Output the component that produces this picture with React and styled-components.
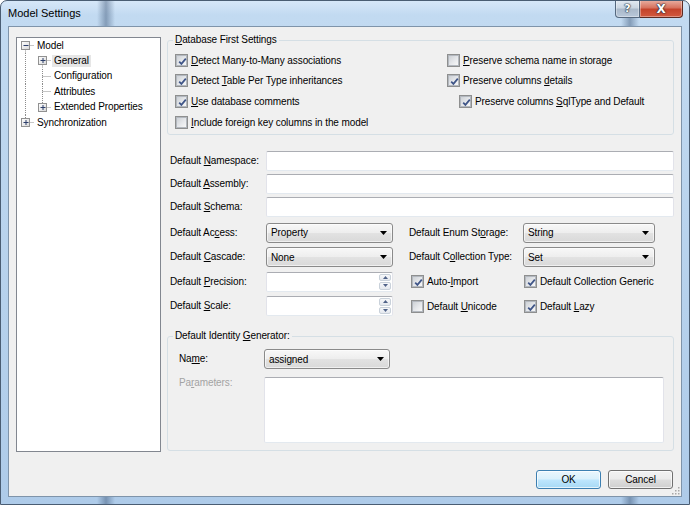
import React from 'react';
import styled, { createGlobalStyle } from 'styled-components';

const GlobalStyle = createGlobalStyle`
  html, body {
    margin: 0;
    padding: 0;
    background: #fff;
    overflow: hidden;
  }
  * {
    box-sizing: border-box;
  }
`;

const Window = styled.div`
  width: 690px;
  height: 505px;
  display: flex;
  flex-direction: column;
  border: 1px solid #4a5d73;
  border-radius: 7px 7px 0 0;
  overflow: hidden;
  background:
    linear-gradient(90deg, transparent 96px, rgba(30, 55, 90, 0.38) 105px, transparent 114px,
      transparent 620px, rgba(30, 55, 90, 0.38) 629px, transparent 638px),
    linear-gradient(180deg, #d6e7f8 0%, #c2daf1 14px, #b6d1ec 60%, #aecbe9 100%);
  font-family: "Liberation Sans", Arial, sans-serif;
  font-size: 10px;
  letter-spacing: -0.1px;
  color: #000;
`;

const TitleBar = styled.div`
  flex: none;
  height: 25px;
  display: flex;
  align-items: flex-start;
  padding-left: 7px;
`;

const Title = styled.div`
  flex: 1;
  font-size: 11px;
  letter-spacing: 0;
  line-height: 25px;
`;

const Caption = styled.div`
  display: flex;
  margin: -1px 6px 0 0;
`;

const CaptionButton = styled.div`
  width: ${p => p.$w}px;
  height: 18px;
  display: flex;
  align-items: center;
  justify-content: center;
  font-family: "DejaVu Sans", sans-serif;
  font-weight: bold;
  font-size: ${p => (p.$close ? 12 : 11)}px;
  color: #fff;
  text-shadow: 0 0 1px #1d2a38, 0 0 1px #1d2a38, 0 0 2px #1d2a38;
  border: 1px solid ${p => (p.$close ? '#5d2a22' : '#55687e')};
  border-top: none;
  border-left: ${p => (p.$close ? 'none' : undefined)};
  border-radius: ${p => (p.$close ? '0 0 4px 0' : '0 0 0 4px')};
  background: ${p =>
    p.$close
      ? 'linear-gradient(180deg, #eab1a4 0%, #d7735f 45%, #c4432b 55%, #d2593f 100%)'
      : 'linear-gradient(180deg, #e4ebf3 0%, #cbd6e2 45%, #aab9ca 55%, #b8c8da 100%)'};
  box-shadow: inset 0 0 0 1px rgba(255, 255, 255, 0.35);
`;

const Client = styled.div`
  position: relative;
  flex: 1;
  margin: 0 7px 7px;
  border: 1px solid #7f94aa;
  background: #f0f0f0;
  padding: 7px 7px 0;
  display: flex;
  flex-direction: column;
`;

const Main = styled.div`
  display: flex;
  align-items: flex-start;
  gap: 6px;
`;

const Tree = styled.div`
  flex: none;
  width: 145px;
  height: 415px;
  margin-top: 3px;
  background: #fff;
  border: 1px solid #828790;
`;

const TreeRow = styled.div`
  display: flex;
  align-items: center;
  height: 15.4px;
  white-space: nowrap;
`;

const TreeLabel = styled.span`
  margin-left: 1px;
  padding: 0 2px;
  line-height: 12px;
  background: ${p => (p.$selected ? '#e6e6e6' : 'transparent')};
`;

const Right = styled.div`
  flex: 1;
  display: flex;
  flex-direction: column;
`;

const Group = styled.fieldset`
  margin: ${p => p.$margin};
  padding: ${p => p.$pad};
  border: 1px solid #d5dfe5;
  border-radius: 3px;
  min-width: 0;
`;

const Legend = styled.legend`
  margin-left: ${p => p.$offset}px;
  padding: 0 2px;
  line-height: 12px;
`;

const CheckGrid = styled.div`
  display: grid;
  grid-template-columns: 272px 1fr;
  grid-auto-rows: 20.67px;
`;

const CheckRow = styled.label`
  display: flex;
  align-items: center;
  gap: 3px;
  padding-left: ${p => p.$indent || 0}px;
  white-space: nowrap;
`;

const Box = styled.span`
  position: relative;
  flex: none;
  width: 13px;
  height: 13px;
  border: 1px solid #8e8f8f;
  background: #fff;
  display: flex;
  align-items: center;
  justify-content: center;

  &::before {
    content: '';
    width: 9px;
    height: 9px;
    border: 1px solid #b3b8bf;
    background: linear-gradient(135deg, #cdd1d6 0%, #e6e8eb 55%, #f7f7f7 100%);
  }

  svg {
    position: absolute;
    left: 1px;
    top: 1px;
  }
`;

const TextFields = styled.div`
  margin-top: 16px;
  display: grid;
  grid-template-columns: 99px 1fr;
  grid-auto-rows: 20px;
  row-gap: 3.3px;
  align-items: center;
`;

const Options = styled.div`
  margin-top: 5.5px;
  display: grid;
  grid-template-columns: 99px 127px 130px 132px;
  grid-auto-rows: 20px;
  row-gap: 4.5px;
  align-items: center;
`;

const FieldLabel = styled.div`
  padding-left: ${p => p.$indent ?? 3}px;
  white-space: nowrap;
  color: ${p => (p.$disabled ? '#a3a3a3' : '#000')};
  align-self: ${p => (p.$top ? 'start' : 'center')};
  line-height: 12px;
`;

const TextBox = styled.div`
  height: ${p => p.$h || 20}px;
  width: ${p => (p.$w ? `${p.$w}px` : 'auto')};
  background: #fff;
  border: 1px solid #e2e3ea;
  border-top-color: #abadb3;
  border-bottom-color: #e3e9ef;
  border-radius: 2px;
  position: relative;
`;

const SelectBox = styled.div`
  width: ${p => p.$w}px;
  height: 20px;
  display: flex;
  align-items: center;
  justify-content: space-between;
  padding: 0 5px 0 4px;
  border: 1px solid #8a8a8a;
  border-radius: 3px;
  background: linear-gradient(180deg, #f8f8f8 0%, #eeeeee 48%, #e2e2e2 52%, #d9d9d9 100%);
  box-shadow: inset 0 0 0 1px rgba(255, 255, 255, 0.6);
`;

const SpinButtons = styled.div`
  position: absolute;
  right: 1px;
  top: 1px;
  bottom: 1px;
  width: 12px;
  display: flex;
  flex-direction: column;
  gap: 1px;
`;

const SpinHalf = styled.div`
  flex: 1;
  display: flex;
  align-items: center;
  justify-content: center;
  border: 1px solid #c9d1da;
  border-radius: 2px;
  background: linear-gradient(180deg, #f7f8fa, #e4e8ee);
`;

const IdentityGrid = styled.div`
  display: grid;
  grid-template-columns: 85px 1fr;
  grid-template-rows: 20px 66px;
  row-gap: 8px;
  align-items: center;
`;

const Footer = styled.div`
  margin-top: 18px;
  display: flex;
  justify-content: flex-end;
  gap: 7px;
  padding-right: 1px;
`;

const Button = styled.div`
  width: 65px;
  height: 19px;
  display: flex;
  align-items: center;
  justify-content: center;
  border: 1px solid ${p => (p.$default ? '#3c7fb1' : '#707070')};
  border-radius: 3px;
  background: ${p =>
    p.$default
      ? 'linear-gradient(180deg, #eaf6fd 0%, #d9f0fc 48%, #bee6fd 52%, #a7d9f5 100%)'
      : 'linear-gradient(180deg, #f2f2f2 0%, #ebebeb 48%, #dddddd 52%, #cfcfcf 100%)'};
  box-shadow: inset 0 0 0 1px rgba(255, 255, 255, 0.7);
`;

const Grip = styled.svg`
  position: absolute;
  right: 1px;
  bottom: 1px;
`;

const Key = styled.span`
  text-decoration: underline;
  text-underline-offset: 1px;
`;

const Arrow = () => (
  <svg width="7" height="4" viewBox="0 0 7 4">
    <polygon points="0,0 7,0 3.5,4" fill="#000" />
  </svg>
);

const Check = ({ checked }) => (
  <Box>
    {checked && (
      <svg width="11" height="11" viewBox="0 0 11 11">
        <path d="M2.2 5.6 L4.4 7.9 L8.8 2.6" fill="none" stroke="#3f5588" strokeWidth="1.7" />
      </svg>
    )}
  </Box>
);

const CheckItem = ({ checked, indent, children }) => (
  <CheckRow $indent={indent}>
    <Check checked={checked} />
    <span>{children}</span>
  </CheckRow>
);

const Select = ({ w, value }) => (
  <SelectBox $w={w}>
    <span>{value}</span>
    <Arrow />
  </SelectBox>
);

const Spin = () => (
  <TextBox $w={127}>
    <SpinButtons>
      <SpinHalf>
        <svg width="5" height="3" viewBox="0 0 5 3">
          <polygon points="0,3 5,3 2.5,0" fill="#4f6288" />
        </svg>
      </SpinHalf>
      <SpinHalf>
        <svg width="5" height="3" viewBox="0 0 5 3">
          <polygon points="0,0 5,0 2.5,3" fill="#4f6288" />
        </svg>
      </SpinHalf>
    </SpinButtons>
  </TextBox>
);

// tree connector cells: pipe, tee, first, last (+ optional expander)
const CELL = 17;
const ROW_H = 15.4;

const Gutter = ({ cells }) => {
  const mid = 8;
  return (
    <svg width={cells.length * CELL} height={ROW_H} style={{ flex: 'none' }}>
      {cells.map((c, i) => {
        const cx = i * CELL + mid + 0.5;
        const cy = 7.5;
        const dash = { stroke: '#8c8c8c', strokeDasharray: '1 1', strokeWidth: 1 };
        const parts = [];
        if (c.type === 'pipe' || c.type === 'tee') parts.push(<line key="v" x1={cx} y1={0} x2={cx} y2={ROW_H} {...dash} />);
        if (c.type === 'first') parts.push(<line key="v" x1={cx} y1={cy} x2={cx} y2={ROW_H} {...dash} />);
        if (c.type === 'last') parts.push(<line key="v" x1={cx} y1={0} x2={cx} y2={cy} {...dash} />);
        if (c.type !== 'pipe') parts.push(<line key="h" x1={cx} y1={cy} x2={i * CELL + CELL} y2={cy} {...dash} />);
        if (c.box) {
          parts.push(
            <g key="b">
              <rect x={cx - 4} y={cy - 4} width="8" height="8" fill="url(#exp)" stroke="#919191" />
              <line x1={cx - 2} y1={cy} x2={cx + 3} y2={cy} stroke="#2d3f6b" />
              {c.box === 'plus' && <line x1={cx + 0.5} y1={cy - 2.5} x2={cx + 0.5} y2={cy + 2.5} stroke="#2d3f6b" />}
            </g>
          );
        }
        return <g key={i}>{parts}</g>;
      })}
    </svg>
  );
};

const treeItems = [
  { label: 'Model', cells: [{ type: 'first', box: 'minus' }] },
  { label: 'General', selected: true, cells: [{ type: 'pipe' }, { type: 'first', box: 'plus' }] },
  { label: 'Configuration', cells: [{ type: 'pipe' }, { type: 'tee' }] },
  { label: 'Attributes', cells: [{ type: 'pipe' }, { type: 'tee' }] },
  { label: 'Extended Properties', cells: [{ type: 'pipe' }, { type: 'last', box: 'plus' }] },
  { label: 'Synchronization', cells: [{ type: 'last', box: 'plus' }] },
];

const App = () => {
  return (
    <>
      <GlobalStyle />
      <svg width="0" height="0" style={{ position: 'absolute' }}>
        <defs>
          <linearGradient id="exp" x1="0" y1="0" x2="1" y2="1">
            <stop offset="0" stopColor="#ffffff" />
            <stop offset="1" stopColor="#d8d8d8" />
          </linearGradient>
        </defs>
      </svg>
      <Window>
        <TitleBar>
          <Title>Model Settings</Title>
          <Caption>
            <CaptionButton $w={25}>?</CaptionButton>
            <CaptionButton $w={43} $close>X</CaptionButton>
          </Caption>
        </TitleBar>
        <Client>
          <Main>
            <Tree>
              {treeItems.map(item => (
                <TreeRow key={item.label}>
                  <Gutter cells={item.cells} />
                  <TreeLabel $selected={item.selected}>{item.label}</TreeLabel>
                </TreeRow>
              ))}
            </Tree>
            <Right>
              <Group $margin="0" $pad="4px 6px 1px 7px">
                <Legend $offset={-2}><Key>D</Key>atabase First Settings</Legend>
                <CheckGrid>
                  <CheckItem checked><Key>D</Key>etect Many-to-Many associations</CheckItem>
                  <CheckItem><Key>P</Key>reserve schema name in storage</CheckItem>
                  <CheckItem checked>Detect <Key>T</Key>able Per Type inheritances</CheckItem>
                  <CheckItem checked>Preserve columns <Key>d</Key>etails</CheckItem>
                  <CheckItem checked><Key>U</Key>se database comments</CheckItem>
                  <CheckItem checked indent={12}>Preserve columns <Key>S</Key>qlType and Default</CheckItem>
                  <CheckItem><Key>I</Key>nclude foreign key columns in the model</CheckItem>
                </CheckGrid>
              </Group>

              <TextFields>
                <FieldLabel>Default <Key>N</Key>amespace:</FieldLabel>
                <TextBox />
                <FieldLabel>Default <Key>A</Key>ssembly:</FieldLabel>
                <TextBox />
                <FieldLabel>Default <Key>S</Key>chema:</FieldLabel>
                <TextBox />
              </TextFields>

              <Options>
                <FieldLabel>Default Ac<Key>c</Key>ess:</FieldLabel>
                <Select w={127} value="Property" />
                <FieldLabel $indent={16}>Default Enum St<Key>o</Key>rage:</FieldLabel>
                <Select w={132} value="String" />

                <FieldLabel>Default <Key>C</Key>ascade:</FieldLabel>
                <Select w={127} value="None" />
                <FieldLabel $indent={16}>Default C<Key>o</Key>llection Type:</FieldLabel>
                <Select w={132} value="Set" />

                <FieldLabel>Default <Key>P</Key>recision:</FieldLabel>
                <Spin />
                <CheckItem checked indent={18}>Auto-<Key>I</Key>mport</CheckItem>
                <CheckItem checked indent={1}>Default Collection Generic</CheckItem>

                <FieldLabel>Default <Key>S</Key>cale:</FieldLabel>
                <Spin />
                <CheckItem indent={18}>Default <Key>U</Key>nicode</CheckItem>
                <CheckItem checked indent={1}>Default <Key>L</Key>azy</CheckItem>
              </Options>

              <Group $margin="14px 0 0" $pad="7px 9px 7px 11px">
                <Legend $offset={-6}>Default Identity <Key>G</Key>enerator:</Legend>
                <IdentityGrid>
                  <FieldLabel $indent={0}>Na<Key>m</Key>e:</FieldLabel>
                  <Select w={126} value="assigned" />
                  <FieldLabel $indent={0} $disabled $top>Pa<Key>r</Key>ameters:</FieldLabel>
                  <TextBox $h={66} />
                </IdentityGrid>
              </Group>
            </Right>
          </Main>
          <Footer>
            <Button $default>OK</Button>
            <Button>Cancel</Button>
          </Footer>
          <Grip width="9" height="9" viewBox="0 0 9 9">
            {[[7, 1], [7, 4], [4, 4], [7, 7], [4, 7], [1, 7]].map(([x, y]) => (
              <rect key={`${x}-${y}`} x={x} y={y} width="1.5" height="1.5" fill="#a8a8a8" />
            ))}
          </Grip>
        </Client>
      </Window>
    </>
  );
};

export default App;
